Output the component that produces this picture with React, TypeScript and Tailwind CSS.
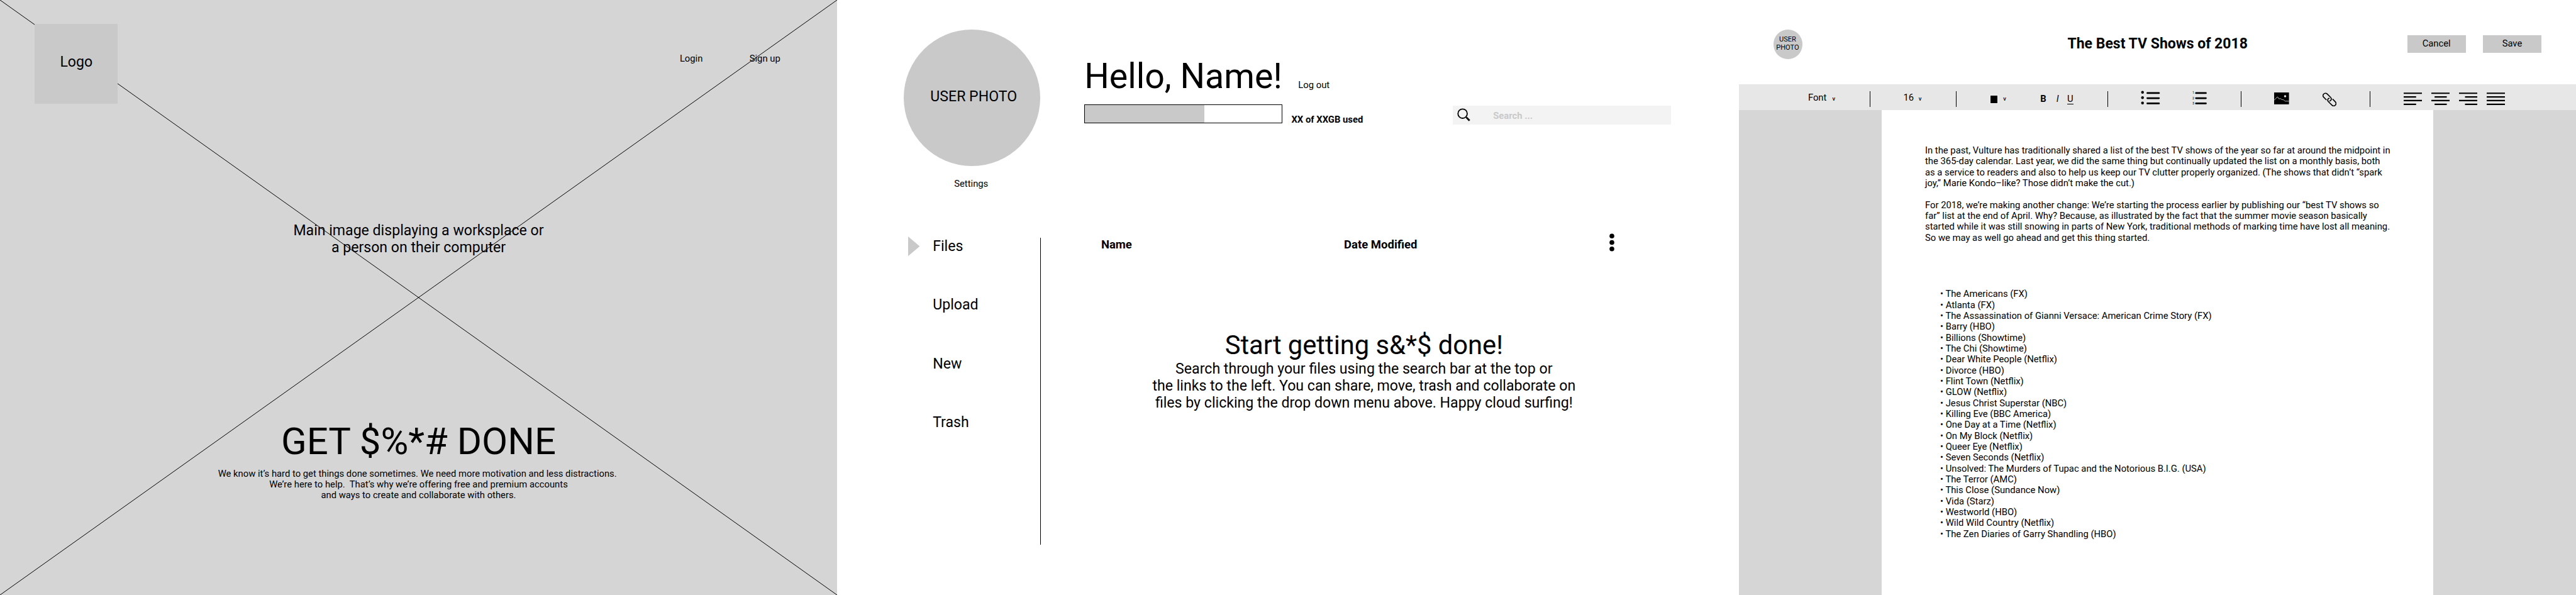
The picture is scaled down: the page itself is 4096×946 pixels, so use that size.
import type { ReactNode } from "react";

const shows = [
  "The Americans (FX)",
  "Atlanta (FX)",
  "The Assassination of Gianni Versace: American Crime Story (FX)",
  "Barry (HBO)",
  "Billions (Showtime)",
  "The Chi (Showtime)",
  "Dear White People (Netflix)",
  "Divorce (HBO)",
  "Flint Town (Netflix)",
  "GLOW (Netflix)",
  "Jesus Christ Superstar (NBC)",
  "Killing Eve (BBC America)",
  "One Day at a Time (Netflix)",
  "On My Block (Netflix)",
  "Queer Eye (Netflix)",
  "Seven Seconds (Netflix)",
  "Unsolved: The Murders of Tupac and the Notorious B.I.G. (USA)",
  "The Terror (AMC)",
  "This Close (Sundance Now)",
  "Vida (Starz)",
  "Westworld (HBO)",
  "Wild Wild Country (Netflix)",
  "The Zen Diaries of Garry Shandling (HBO)",
];

function Landing() {
  return (
    <section className="relative h-full w-[1331px] shrink-0 bg-[#d5d5d5]">
      <svg className="absolute inset-0 h-full w-full" viewBox="0 0 1331 946" preserveAspectRatio="none">
        <path d="M0 0L1331 946M1331 0L0 946" stroke="#000" strokeWidth="1" fill="none" />
      </svg>
      <div className="relative flex flex-col">
        <header className="flex h-[165px] items-start pt-[38.3px] pl-[55.3px]">
          <div className="flex h-[126.8px] w-[132px] items-center justify-center bg-[#c9c9c9] pb-[6px] text-[23.1px] leading-[27px]">
            Logo
          </div>
          <nav className="mt-[46.7px] ml-[893.6px] flex text-[14.8px] leading-[17.34px]">
            <a className="w-[110.8px]">Login</a>
            <a>Sign up</a>
          </nav>
        </header>
        <p className="mt-[188.2px] text-center text-[23.1px] leading-[27px]">
          Main image displaying a worksplace or
          <br />a person on their computer
        </p>
        <h1 className="mt-[259.6px] text-center text-[59.9px] leading-[70px]">GET $%*# DONE</h1>
        <p className="mt-[8px] text-center text-[14.8px] leading-[17.34px]">
          We know it’s hard to get things done sometimes. We need more motivation and less distractions.&nbsp;
          <br />
          We’re here to help.&nbsp; That’s why we’re offering free and premium accounts
          <br />
          and ways to create and collaborate with others.
        </p>
      </div>
    </section>
  );
}

function Dashboard() {
  return (
    <section className="flex h-full w-[1433.5px] shrink-0 flex-col bg-white">
      <header className="flex h-[378px] items-start pl-[106.4px]">
        <div className="flex w-[216.7px] flex-col items-center pt-[47px]">
          <div className="flex h-[216.7px] w-[216.7px] items-center justify-center rounded-full bg-[#c9c9c9] pb-[4px] pl-[5px] text-[23.1px] leading-[27px]">
            USER PHOTO
          </div>
          <a className="mt-[20.5px] pr-[3px] text-[14.8px] leading-[17.34px]">Settings</a>
        </div>
        <div className="ml-[70.1px] pt-[88.7px]">
          <div className="flex items-baseline">
            <h1 className="w-[340.2px] text-[55.5px] leading-[65px] whitespace-nowrap">Hello, Name!</h1>
            <a className="text-[14.8px] leading-[17.34px]">Log out</a>
          </div>
          <div className="mt-[12px] flex items-start">
            <div className="h-[30.2px] w-[314.7px] border border-black bg-white">
              <div className="h-full w-[189.5px] bg-[#c9c9c9]" />
            </div>
            <span className="mt-[16.7px] ml-[14.6px] w-[257px] text-[14.8px] leading-[17.34px] font-bold">
              XX of XXGB used
            </span>
            <div className="mt-[2.5px] flex h-[29.5px] w-[346.9px] items-center bg-[#f3f3f3] pl-[7px]">
              <svg className="h-[21px] w-[21px]" viewBox="0 0 28 28" fill="none" stroke="#000">
                <circle cx="11.5" cy="11.5" r="9.8" strokeWidth="2.4" />
                <path d="M18.6 18.6L20.5 20.5" strokeWidth="2.4" />
                <path d="M20 20L26.2 26.4" strokeWidth="3.8" />
              </svg>
              <span className="ml-[35.8px] pt-[3px] text-[14.8px] leading-[17.34px] font-bold text-[#c9c9c9]">
                Search ...
              </span>
            </div>
          </div>
        </div>
      </header>
      <div className="flex">
        <nav className="h-[488.4px] w-[323.6px] border-r border-black text-[23.1px] leading-[27px]">
          <div className="flex h-[93.6px] items-start">
            <svg className="-mt-[2.2px] ml-[112.6px] h-[31.1px] w-[18.4px]" viewBox="0 0 18.4 31.1">
              <path d="M0 0L18.4 15.55L0 31.1Z" fill="#c9c9c9" />
            </svg>
            <a className="mt-[-0.4px] ml-[21.2px]">Files</a>
          </div>
          <a className="-mt-[0.6px] block h-[93.6px] pl-[152.2px]">Upload</a>
          <a className="block h-[93.5px] pl-[152.2px]">New</a>
          <a className="block h-[93.5px] pl-[152.2px]">Trash</a>
        </nav>
        <div className="w-[1028.4px]">
          <div className="flex h-[145.6px] items-start pl-[96.3px] text-[18.5px] leading-[22px] font-bold">
            <span className="w-[386.2px]">Name</span>
            <span className="w-[422px]">Date Modified</span>
            <svg className="-mt-[7px] h-[29px] w-[8px]" viewBox="0 0 8 29">
              <circle cx="4" cy="4.2" r="3.8" />
              <circle cx="4" cy="14.5" r="3.8" />
              <circle cx="4" cy="24.7" r="3.8" />
            </svg>
          </div>
          <h2 className="text-center text-[41.7px] leading-[49px]">Start getting s&amp;*$ done!</h2>
          <p className="text-center text-[23.13px] leading-[27.1px]">
            Search through your files using the search bar at the top or
            <br />
            the links to the left. You can share, move, trash and collaborate on
            <br />
            files by clicking the drop down menu above. Happy cloud surfing!
          </p>
        </div>
      </div>
    </section>
  );
}

function Divider({ className }: { className: string }) {
  return <div className={"h-[25px] w-px shrink-0 bg-black " + className} />;
}

function Caret({ className }: { className: string }) {
  return <span className={"text-[9.25px] leading-[11px] font-medium " + className}>v</span>;
}

function AlignIcon({ d }: { d: string }) {
  return (
    <svg className="h-[20px] w-[29.3px] shrink-0" viewBox="0 0 40 27.3" fill="none" stroke="#000" strokeWidth="3">
      <path d={d} />
    </svg>
  );
}

function Item({ className, children }: { className: string; children: ReactNode }) {
  return <div className={"flex shrink-0 items-baseline text-[14.8px] leading-[17.34px] " + className}>{children}</div>;
}

function Toolbar() {
  return (
    <div className="flex h-[41.3px] shrink-0 items-start bg-[#e7e7e7]">
      <Item className="mt-[13px] ml-[110.4px] w-[98.6px]">
        Font
        <Caret className="ml-[9px]" />
      </Item>
      <Divider className="mt-[10.8px]" />
      <Item className="mt-[13px] ml-[52px] w-[84px]">
        16
        <Caret className="ml-[7.6px]" />
      </Item>
      <Divider className="mt-[10.8px]" />
      <div className="mt-[17.3px] ml-[52.1px] h-[13.2px] w-[13.2px] border border-[#f4f4f4] bg-black" />
      <Item className="mt-[13px] ml-[8.4px] w-[59px]">
        <Caret className="mt-0" />
        <span className="w-0">&nbsp;</span>
      </Item>
      <Item className="mt-[14.8px] w-[107px]">
        <b className="w-[25.5px]">B</b>
        <i className="w-[17.3px]">I</i>
        <span className="border-b border-black leading-[15px]">U</span>
      </Item>
      <Divider className="mt-[10.8px]" />
      <svg className="mt-[10.3px] ml-[51.5px] h-[23px] w-[31px]" viewBox="0 0 42 31.2">
        <circle cx="3.7" cy="3.7" r="3" />
        <circle cx="3.7" cy="15.3" r="3" />
        <circle cx="3.7" cy="26.7" r="3" />
        <path d="M14.1 5.3H39.2M14.1 16.3H39.2M14.1 27.7H39.2" stroke="#000" strokeWidth="3.7" strokeLinecap="round" />
      </svg>
      <svg className="mt-[10.3px] ml-[51.5px] h-[23px] w-[24px]" viewBox="0 0 32.6 31.2">
        <g fontFamily="Roboto, sans-serif" fontSize="6" fontWeight="500">
          <text x="0.4" y="7">1</text>
          <text x="0.4" y="18.6">2</text>
          <text x="0.4" y="30">3</text>
        </g>
        <path d="M7.8 5.3H29.2M7.8 16.3H29.2M7.8 27.7H29.2" stroke="#000" strokeWidth="3.7" strokeLinecap="round" />
      </svg>
      <Divider className="mt-[10.8px] ml-[53px]" />
      <svg className="mt-[13px] ml-[52.2px] h-[18.9px] w-[23.6px]" viewBox="0 0 32 25.6">
        <rect width="32" height="25.6" />
        <circle cx="23.7" cy="8" r="2.4" fill="#e7e7e7" />
        <path
          d="M0 16.8L7.3 9.3L10.6 14L13.3 13L16.6 15.3L20 15.7L24 18.8H32"
          fill="none"
          stroke="#bdbdbd"
          strokeWidth="1.3"
        />
      </svg>
      <svg
        className="mt-[12.4px] ml-[52.6px] h-[22.4px] w-[22.2px]"
        viewBox="0 0 30 30.3"
        fill="none"
        stroke="#000"
        strokeWidth="2.2"
        strokeLinecap="round"
      >
        <path d="M7.8 15.6L2.9 10.7C0.6 8.4 0.5 5.4 2.4 3.4C4.4 1.3 7.6 0.9 10 3.2L17 10.1C19.3 12.4 19.3 15.2 17.5 17.3L15.5 18.4" />
        <path d="M14.1 12.6L12.4 13.2C10.6 15.3 10.8 18.1 13 20.3L19.8 27C22.2 29.4 25.4 29.4 27.4 27.4C29.4 25.4 29.5 22.2 27.1 19.8L22.2 14.7" />
      </svg>
      <Divider className="mt-[10.8px] ml-[53.6px]" />
      <div className="mt-[12.6px] ml-[52.7px] flex gap-[14.6px]">
        <AlignIcon d="M0 1.7H40M0 9.7H27M0 17.7H40M0 25.7H27" />
        <AlignIcon d="M0 1.7H40M7 9.7H33.5M0 17.7H40M7 25.7H33.5" />
        <AlignIcon d="M0 1.7H40M13 9.7H40M0 17.7H40M13 25.7H40" />
        <AlignIcon d="M0 1.7H40M0 9.7H40M0 17.7H40M0 25.7H40" />
      </div>
    </div>
  );
}

function Editor() {
  return (
    <section className="flex h-full w-[1331.5px] shrink-0 flex-col bg-white">
      <header className="flex h-[134.2px] shrink-0 items-start pl-[55.5px]">
        <div className="mt-[47.2px] flex h-[46.4px] w-[46.4px] items-center justify-center rounded-full bg-[#c9c9c9] pr-[1.5px] pb-[2px] text-center text-[11.1px] leading-[13px]">
          USER
          <br />
          PHOTO
        </div>
        <h1 className="mt-[56.2px] ml-[319.8px] w-[489px] text-center text-[23px] leading-[27px] font-bold">
          The Best TV Shows of 2018
        </h1>
        <button className="mt-[56.2px] ml-[152.6px] h-[27.8px] w-[92.8px] bg-[#c9c9c9] text-[14.8px] leading-[17.34px]">
          Cancel
        </button>
        <button className="mt-[56.2px] ml-[27.6px] h-[27.8px] w-[92.6px] bg-[#c9c9c9] text-[14.8px] leading-[17.34px]">
          Save
        </button>
      </header>
      <Toolbar />
      <main className="flex flex-1 bg-[#d6d6d6] pr-[226.6px] pl-[227.5px]">
        <article className="w-full bg-white pt-[55.5px] pl-[69px] text-[14.8px] leading-[17.34px] whitespace-nowrap">
          <p>
            In the past, Vulture has traditionally shared a list of the best TV shows of the year so far at around the
            midpoint in
            <br />
            the 365-day calendar. Last year, we did the same thing but continually updated the list on a monthly basis,
            both
            <br />
            as a service to readers and also to help us keep our TV clutter properly organized. (The shows that didn’t
            “spark
            <br />
            joy,” Marie Kondo–like? Those didn’t make the cut.)
          </p>
          <p className="mt-[17.34px]">
            For 2018, we’re making another change: We’re starting the process earlier by publishing our “best TV shows so
            <br />
            far” list at the end of April. Why? Because, as illustrated by the fact that the summer movie season
            basically
            <br />
            started while it was still snowing in parts of New York, traditional methods of marking time have lost all
            meaning.
            <br />
            So we may as well go ahead and get this thing started.
          </p>
          <ul className="mt-[72.2px] pl-[24px]">
            {shows.map((show) => (
              <li key={show}>• {show}</li>
            ))}
          </ul>
        </article>
      </main>
    </section>
  );
}

export default function App() {
  return (
    <div className="flex h-[946px] w-[4096px] overflow-hidden bg-white font-['Roboto',sans-serif] text-black">
      <Landing />
      <Dashboard />
      <Editor />
    </div>
  );
}
